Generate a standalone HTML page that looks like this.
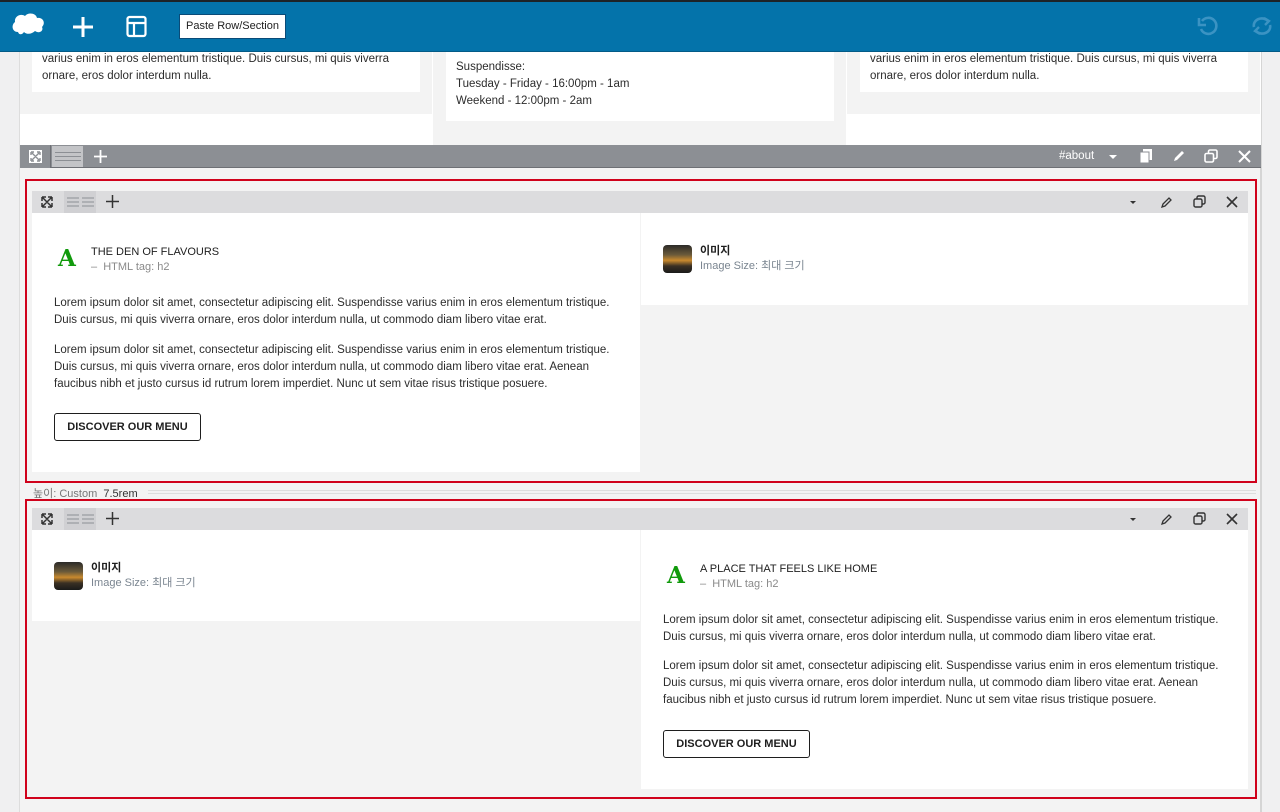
<!DOCTYPE html>
<html><head><meta charset="utf-8"><style>
*{box-sizing:border-box;margin:0;padding:0}
body{width:1280px;height:812px;overflow:hidden;background:#f0f0f1;font-family:"Liberation Sans","Noto Sans CJK KR",sans-serif;font-size:12px;color:#1e1e1e;position:relative}
.a{position:absolute}
.txt{line-height:17px;font-size:11.5px;color:#2c2c2c}
.tb{background:#dcdcde;height:22px}
.red{border:2px solid #d0021b}
.btn{border:1px solid #1e1e1e;border-radius:3px;background:#fff;font-size:11px;font-weight:bold;height:28px;line-height:26px;width:147px;text-align:center;padding:0}
.gray{color:#8a8a8a}
</style></head><body>
<div class="a" style="left:19px;top:52px;width:1243px;height:760px;background:#f3f3f3;border-left:1px solid #ddd;border-right:2px solid #d5d5d5"></div>
<div class="a" style="left:20px;top:52px;width:1241px;height:93px;background:#fff"></div>
<div class="a" style="left:20px;top:52px;width:412px;height:62px;background:#f3f3f3"></div>
<div class="a" style="left:433px;top:52px;width:413px;height:93px;background:#f3f3f3"></div>
<div class="a" style="left:847px;top:52px;width:413px;height:62px;background:#f3f3f3"></div>
<div class="a txt" style="left:32px;top:52px;width:388px;height:40px;background:#fff;padding:0 10px;line-height:17px"><div style="margin-top:-1px">varius enim in eros elementum tristique. Duis cursus, mi quis viverra ornare, eros dolor interdum nulla.</div></div>
<div class="a txt" style="left:446px;top:52px;width:388px;height:69px;background:#fff;padding:7px 10px 0">Suspendisse:<br>Tuesday - Friday - 16:00pm - 1am<br>Weekend - 12:00pm - 2am</div>
<div class="a txt" style="left:860px;top:52px;width:388px;height:40px;background:#fff;padding:0 10px"><div style="margin-top:-1px">varius enim in eros elementum tristique. Duis cursus, mi quis viverra ornare, eros dolor interdum nulla.</div></div>

<div class="a" style="left:0;top:0;width:1280px;height:52px;background:#0473aa;border-top:2px solid #1d2327;border-bottom:1px solid #035b87"></div>
<svg class="a" style="left:10px;top:12px" width="36" height="26" viewBox="0 0 36 26"><path d="M8 20C2 20 1 13 5 10 4 4 11 1 15 4 18 0 26 1 27 6 33 5 36 11 32 15 34 19 29 22 25 19 22 22 17 23 14 20 12 23 9 23 8 20Z" fill="#fff"/></svg>
<svg class="a" style="left:72px;top:16px" width="22" height="22"><path d="M11 1V21M1 11H21" stroke="#fff" stroke-width="3"/></svg>
<svg class="a" style="left:126px;top:15px" width="22" height="24"><rect x="1.5" y="2" width="18" height="19" rx="2" fill="none" stroke="#fff" stroke-width="2.2"/><path d="M1.5 8H19.5M8 8V21" stroke="#fff" stroke-width="2.2"/></svg>
<div class="a" style="left:179px;top:14px;width:107px;height:25px;background:#fff;border:1px solid #0a4b78;font-size:11px;line-height:23px;text-align:center">Paste Row/Section</div>
<svg class="a" style="left:1197px;top:15px" width="22" height="22"><path d="M5 6A8 8 0 1 1 4 14" fill="none" stroke="#3b93c3" stroke-width="2.6"/><path d="M2 3V10H9" fill="none" stroke="#3b93c3" stroke-width="2.6"/></svg>
<svg class="a" style="left:1250px;top:15px" width="24" height="22"><path d="M4 12A8 7 0 0 1 18 6M20 10A8 7 0 0 1 6 16" fill="none" stroke="#3b93c3" stroke-width="2.6"/><path d="M14 3L19 6 15 10M10 19 5 16 9 12" fill="none" stroke="#3b93c3" stroke-width="2.4"/></svg>

<div class="a" style="left:20px;top:145px;width:1241px;height:23px;background:#8c8f94;border-bottom:1px solid #6e7075"></div>
<div class="a" style="left:20px;top:145px;width:31px;height:23px;background:#8c8f94;border-right:1px solid #6e7075"></div>
<svg class="a" style="left:29px;top:150px" width="13" height="13"><rect width="13" height="13" fill="#fff"/><path d="M3 3L10 10M10 3L3 10M2 2H5M2 2V5M11 2H8M11 2V5M2 11H5M2 11V8M11 11H8M11 11V8" stroke="#8c8f94" stroke-width="1.4" fill="none"/></svg>
<div class="a" style="left:52px;top:146px;width:31px;height:21px;background:#c3c4c7"></div>
<div class="a" style="left:55px;top:152px;width:26px;height:9px;border-top:1px solid #8c8f94;border-bottom:1px solid #8c8f94"></div>
<div class="a" style="left:55px;top:156px;width:26px;height:1px;background:#8c8f94"></div>
<svg class="a" style="left:94px;top:150px" width="13" height="13"><path d="M6.5 0V13M0 6.5H13" stroke="#fff" stroke-width="1.8"/></svg>
<div class="a" style="left:1059px;top:150px;color:#fff;font-size:11.5px">#about</div>
<div class="a" style="left:1109px;top:155px;border:4px solid transparent;border-top-color:#fff"></div>
<svg class="a" style="left:1139px;top:149px" width="14" height="15"><rect x="4" y="0" width="9" height="11" fill="#fff"/><rect x="1" y="3" width="9" height="11" fill="#fff" stroke="#8c8f94"/></svg>
<svg class="a" style="left:1172px;top:149px" width="14" height="14"><path d="M2 12L3 9 10 2 12 4 5 11Z" fill="#fff"/></svg>
<svg class="a" style="left:1204px;top:149px" width="14" height="14"><rect x="4.5" y="1" width="8.5" height="8.5" rx="1.5" fill="none" stroke="#fff" stroke-width="1.6"/><rect x="1" y="4.5" width="8.5" height="8.5" rx="1.5" fill="#8c8f94" stroke="#fff" stroke-width="1.6"/></svg>
<svg class="a" style="left:1238px;top:150px" width="13" height="13"><path d="M1 1L12 12M12 1L1 12" stroke="#fff" stroke-width="2"/></svg>

<div class="a red" style="left:25px;top:179px;width:1232px;height:304px"></div>
<div class="a tb" style="left:32px;top:191px;width:1216px"></div>
<div class="a" style="left:64px;top:191px;width:32px;height:22px;background:#d0d0d3"></div>
<div class="a" style="left:32px;top:213px;width:608px;height:259px;background:#fff"></div>
<div class="a" style="left:641px;top:213px;width:607px;height:92px;background:#fff"></div>
<div class="a" style="left:58px;top:245px;color:#119a0c;font:bold 23px 'DejaVu Serif',serif">A</div>
<div class="a" style="left:91px;top:245px;font-size:11px;line-height:15px">THE DEN OF FLAVOURS<br><span class="gray">–&nbsp; HTML tag: h2</span></div>
<div class="a txt" style="left:54px;top:295px;width:580px">Lorem ipsum dolor sit amet, consectetur adipiscing elit. Suspendisse varius enim in eros elementum tristique. Duis cursus, mi quis viverra ornare, eros dolor interdum nulla, ut commodo diam libero vitae erat.</div>
<div class="a txt" style="left:54px;top:342px;width:580px">Lorem ipsum dolor sit amet, consectetur adipiscing elit. Suspendisse varius enim in eros elementum tristique. Duis cursus, mi quis viverra ornare, eros dolor interdum nulla, ut commodo diam libero vitae erat. Aenean faucibus nibh et justo cursus id rutrum lorem imperdiet. Nunc ut sem vitae risus tristique posuere.</div>
<div class="a btn" style="left:54px;top:413px">DISCOVER OUR MENU</div>
<div class="a" style="left:663px;top:245px;width:29px;height:28px;border-radius:4px;background:linear-gradient(180deg,#2b2a28 0%,#6b5a3a 35%,#c98a2e 55%,#3a3024 75%,#1a1a1a 100%)"></div>
<div class="a" style="left:700px;top:244px;font-size:11px;line-height:15px"><b>이미지</b><br><span style="color:#7a8590">Image Size: 최대 크기</span></div>

<div class="a" style="left:33px;top:485px;font-size:11px;color:#777">높이: Custom&nbsp; <span style="color:#333">7.5rem</span></div>
<div class="a" style="left:148px;top:490px;width:1108px;height:4px;border-top:1px solid #ddd;border-bottom:1px solid #ddd"></div>

<div class="a red" style="left:25px;top:499px;width:1232px;height:300px"></div>
<div class="a tb" style="left:32px;top:508px;width:1216px"></div>
<div class="a" style="left:64px;top:508px;width:32px;height:22px;background:#d0d0d3"></div>
<div class="a" style="left:32px;top:530px;width:608px;height:91px;background:#fff"></div>
<div class="a" style="left:641px;top:530px;width:607px;height:259px;background:#fff"></div>
<div class="a" style="left:54px;top:562px;width:29px;height:28px;border-radius:4px;background:linear-gradient(180deg,#2b2a28 0%,#6b5a3a 35%,#c98a2e 55%,#3a3024 75%,#1a1a1a 100%)"></div>
<div class="a" style="left:91px;top:561px;font-size:11px;line-height:15px"><b>이미지</b><br><span style="color:#7a8590">Image Size: 최대 크기</span></div>
<div class="a" style="left:667px;top:562px;color:#119a0c;font:bold 23px 'DejaVu Serif',serif">A</div>
<div class="a" style="left:700px;top:562px;font-size:11px;line-height:15px">A PLACE THAT FEELS LIKE HOME<br><span class="gray">–&nbsp; HTML tag: h2</span></div>
<div class="a txt" style="left:663px;top:612px;width:580px">Lorem ipsum dolor sit amet, consectetur adipiscing elit. Suspendisse varius enim in eros elementum tristique. Duis cursus, mi quis viverra ornare, eros dolor interdum nulla, ut commodo diam libero vitae erat.</div>
<div class="a txt" style="left:663px;top:658px;width:580px">Lorem ipsum dolor sit amet, consectetur adipiscing elit. Suspendisse varius enim in eros elementum tristique. Duis cursus, mi quis viverra ornare, eros dolor interdum nulla, ut commodo diam libero vitae erat. Aenean faucibus nibh et justo cursus id rutrum lorem imperdiet. Nunc ut sem vitae risus tristique posuere.</div>
<div class="a btn" style="left:663px;top:730px">DISCOVER OUR MENU</div>

<svg class="a" style="left:41px;top:196px" width="12" height="12"><path d="M1 1L11 11M11 1L1 11M1 1H5M1 1V5M11 1H7M11 1V5M1 11H5M1 11V7M11 11H7M11 11V7" stroke="#333" stroke-width="1.5" fill="none"/></svg>
<svg class="a" style="left:67px;top:196px" width="27" height="12"><path d="M0 2H12M15 2H27M0 6H12M15 6H27M0 10H12M15 10H27" stroke="#8c8f94"/></svg>
<svg class="a" style="left:106px;top:195px" width="13" height="13"><path d="M6.5 0V13M0 6.5H13" stroke="#333" stroke-width="1.5"/></svg>
<div class="a" style="left:1130px;top:201px;border:3.5px solid transparent;border-top-color:#333"></div>
<svg class="a" style="left:1160px;top:196px" width="13" height="13"><path d="M2 11L3 8 9 2 11 4 5 10Z" fill="none" stroke="#333" stroke-width="1.3"/></svg>
<svg class="a" style="left:1193px;top:195px" width="13" height="13"><rect x="4" y="1" width="8" height="8" rx="1.5" fill="none" stroke="#333" stroke-width="1.4"/><rect x="1" y="4" width="8" height="8" rx="1.5" fill="#dcdcde" stroke="#333" stroke-width="1.4"/></svg>
<svg class="a" style="left:1226px;top:196px" width="12" height="12"><path d="M1 1L11 11M11 1L1 11" stroke="#333" stroke-width="1.6"/></svg>

<svg class="a" style="left:41px;top:513px" width="12" height="12"><path d="M1 1L11 11M11 1L1 11M1 1H5M1 1V5M11 1H7M11 1V5M1 11H5M1 11V7M11 11H7M11 11V7" stroke="#333" stroke-width="1.5" fill="none"/></svg>
<svg class="a" style="left:67px;top:513px" width="27" height="12"><path d="M0 2H12M15 2H27M0 6H12M15 6H27M0 10H12M15 10H27" stroke="#8c8f94"/></svg>
<svg class="a" style="left:106px;top:512px" width="13" height="13"><path d="M6.5 0V13M0 6.5H13" stroke="#333" stroke-width="1.5"/></svg>
<div class="a" style="left:1130px;top:518px;border:3.5px solid transparent;border-top-color:#333"></div>
<svg class="a" style="left:1160px;top:513px" width="13" height="13"><path d="M2 11L3 8 9 2 11 4 5 10Z" fill="none" stroke="#333" stroke-width="1.3"/></svg>
<svg class="a" style="left:1193px;top:512px" width="13" height="13"><rect x="4" y="1" width="8" height="8" rx="1.5" fill="none" stroke="#333" stroke-width="1.4"/><rect x="1" y="4" width="8" height="8" rx="1.5" fill="#dcdcde" stroke="#333" stroke-width="1.4"/></svg>
<svg class="a" style="left:1226px;top:513px" width="12" height="12"><path d="M1 1L11 11M11 1L1 11" stroke="#333" stroke-width="1.6"/></svg>
</body></html>
